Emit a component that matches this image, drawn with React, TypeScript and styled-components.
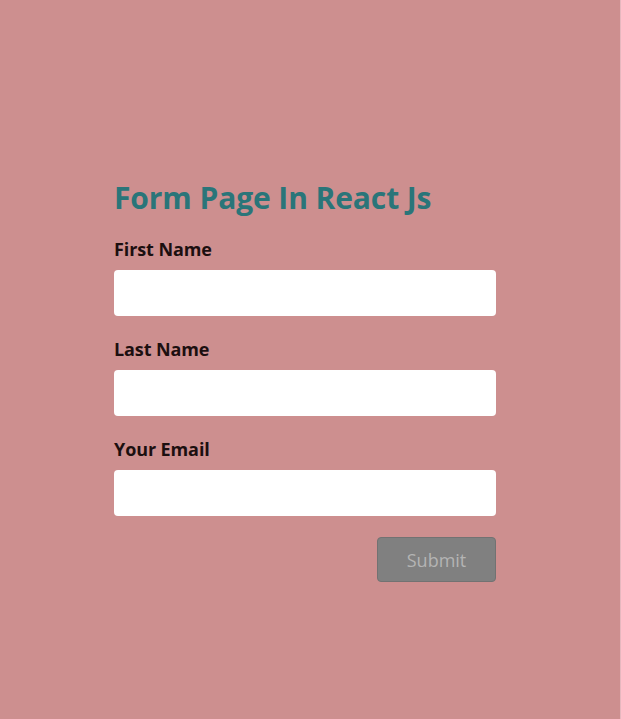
import React from "react";
import styled, { createGlobalStyle } from "styled-components";

const Global = createGlobalStyle`
  html, body { margin: 0; padding: 0; }
  body { font-family: "Open Sans", "Noto Sans", sans-serif; background: #cd8f8f; }
  * { box-sizing: border-box; }
`;

const Page = styled.div`
  min-height: 719px;
  background: #cd8f8f;
  border-right: 1px solid #e6b8bf;
  padding: 178px 125px 0 114px;
  display: flex;
  flex-direction: column;
`;

const Form = styled.form`
  width: 382px;
  display: flex;
  flex-direction: column;
`;

const Title = styled.h1`
  margin: 0 0 19px;
  font-family: "Open Sans", sans-serif;
  font-weight: 700;
  font-size: 30px;
  line-height: 40px;
  color: #2a7579;
  letter-spacing: -0.1px;
`;

const Field = styled.div`
  display: flex;
  flex-direction: column;
  gap: 9px;
  margin-bottom: 21px;
`;

const Label = styled.label`
  font-family: "Open Sans", sans-serif;
  font-weight: 700;
  font-size: 18px;
  line-height: 24px;
  color: #1c0f10;
  letter-spacing: -0.1px;
`;

const Input = styled.input`
  height: 46px;
  width: 100%;
  border: none;
  border-radius: 4px;
  background: #ffffff;
  padding: 0 12px;
  font-size: 16px;
  outline: none;
`;

const Actions = styled.div`
  display: flex;
  justify-content: flex-end;
  margin-top: 0;
`;

const Button = styled.button`
  width: 119px;
  height: 45px;
  border: 1px solid #727272;
  border-radius: 4px;
  background: #808080;
  color: #b4b4b4;
  font-family: "Open Sans", sans-serif;
  font-size: 18px;
  cursor: pointer;
`;

const fields = ["First Name", "Last Name", "Your Email"];

export default function App() {
  return (
    <>
      <Global />
      <Page>
        <Form onSubmit={(e) => e.preventDefault()}>
          <Title>Form Page In React Js</Title>
          {fields.map((f) => (
            <Field key={f}>
              <Label>{f}</Label>
              <Input type={f === "Your Email" ? "email" : "text"} />
            </Field>
          ))}
          <Actions>
            <Button type="submit">Submit</Button>
          </Actions>
        </Form>
      </Page>
    </>
  );
}
